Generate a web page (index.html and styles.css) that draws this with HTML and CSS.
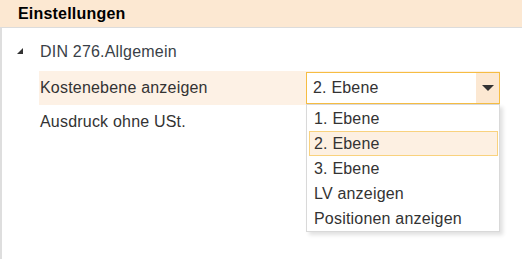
FILE: index.html
```html
<!DOCTYPE html>
<html>
<head>
<meta charset="utf-8">
<link rel="stylesheet" href="styles.css">
</head>
<body>
<div class="panel">
  <div class="panel-header">Einstellungen</div>
  <div class="panel-body">
    <div class="node">
      <span class="toggle"><svg width="7" height="7" viewBox="0 0 7 7"><polygon points="6,0 6,6 0,6" fill="#333"/></svg></span>
      <span class="node-label">DIN 276.Allgemein</span>
    </div>
    <div class="children">
      <div class="prop-row active">
        <span class="prop-label">Kostenebene anzeigen</span>
        <div class="select">
          <span class="select-value">2. Ebene</span>
          <span class="select-btn"><svg width="12" height="6" viewBox="0 0 12 6"><polygon points="0,0 12,0 6,6" fill="#333"/></svg></span>
          <ul class="dropdown">
            <li>1. Ebene</li>
            <li class="selected">2. Ebene</li>
            <li>3. Ebene</li>
            <li>LV anzeigen</li>
            <li>Positionen anzeigen</li>
          </ul>
        </div>
      </div>
      <div class="prop-row">
        <span class="prop-label">Ausdruck ohne USt.</span>
      </div>
    </div>
  </div>
</div>
</body>
</html>
```
FILE: styles.css
```css
html, body {
  margin: 0;
  padding: 0;
  background: #fff;
}
body {
  font-family: "Liberation Sans", Arial, Helvetica, sans-serif;
  font-size: 16px;
  letter-spacing: 0.2px;
  color: #333;
  width: 522px;
  height: 259px;
  overflow: hidden;
}
.panel {
  display: flex;
  flex-direction: column;
  height: 259px;
}
.panel-header {
  height: 27px;
  line-height: 27px;
  background: #fce8d2;
  border-bottom: 1px solid #dcdcdc;
  padding-left: 18px;
  font-weight: bold;
  color: #000;
}
.panel-body {
  flex: 1;
  border-left: 2px solid #dedede;
  padding-top: 11px;
}
.node {
  display: flex;
  align-items: center;
  height: 25px;
}
.toggle {
  display: flex;
  width: 7px;
  height: 7px;
  margin-left: 15px;
  margin-right: 16px;
}
.node-label {
  color: #3a3f47;
}
.children {
  padding-left: 37px;
  padding-top: 7px;
}
.prop-row {
  display: flex;
  align-items: center;
  height: 34px;
  width: 461px;
}
.prop-row.active {
  background: #fdf1e5;
}
.prop-label {
  flex: 1;
  padding-left: 1px;
}
.select {
  position: relative;
  width: 192px;
  height: 30px;
  border: 1px solid #f6bd43;
  background: #fff;
  display: flex;
  align-items: center;
  box-sizing: content-box;
}
.select-value {
  flex: 1;
  padding-left: 6px;
}
.select-btn {
  width: 23px;
  height: 30px;
  background: #fce8d2;
  display: flex;
  align-items: center;
  justify-content: center;
}
.dropdown {
  position: absolute;
  left: -1px;
  top: 31px;
  width: 192px;
  margin: 0;
  padding: 1px 0 0;
  list-style: none;
  background: #fff;
  border: 1px solid #d9d9d9;
  box-shadow: 3px 3px 4px rgba(0, 0, 0, 0.12);
  z-index: 10;
}
.dropdown li {
  height: 25px;
  line-height: 25px;
  padding-left: 5px;
  margin: 0 1px 0 2px;
  box-sizing: border-box;
}
.dropdown li.selected {
  background: #fdf0e2;
  border: 1px solid #f9d27e;
  line-height: 23px;
  padding-left: 4px;
}
```
